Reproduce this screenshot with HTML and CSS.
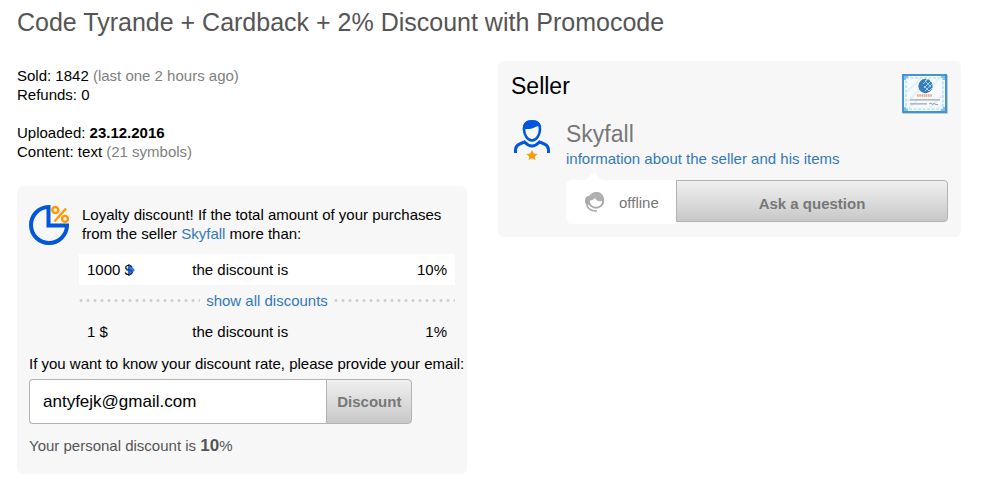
FILE: index.html
```html
<!DOCTYPE html>
<html lang="en">

<head>
    <meta charset="UTF-8">
    <meta name="viewport" content="width=device-width, initial-scale=1.0">
    <title>Code Tyrande + Cardback</title>
    <link rel="stylesheet" href="styles.css">
</head>

<body>
    <h1>Code Tyrande + Cardback + 2% Discount with Promocode</h1>
    <div class="columns">
        <div class="product">
            <p>Sold: 1842 <span class="muted">(last one 2 hours ago)</span><br>Refunds: 0</p>
            <p>Uploaded: <b>23.12.2016</b><br>Content: text <span class="muted">(21 symbols)</span></p>

            <div class="card loyalty">
                <div class="loyalty-head">
                    <svg width="40" height="40" viewBox="0 0 40 40" fill="none">
                        <path d="M19.5 2A18 18 0 1 0 38 20.5H19.5Z" stroke="#0057dc" stroke-width="4"/>
                        <g stroke="#f90" stroke-width="2.4">
                            <circle cx="26.3" cy="5" r="3"/>
                            <circle cx="36" cy="13.9" r="3"/>
                            <path d="M25.5 16.5L37 3.5"/>
                        </g>
                    </svg>
                    <div>Loyalty discount! If the total amount of your purchases from the seller <a href="#">Skyfall</a> more than:</div>
                </div>
                <table class="rates">
                    <tr class="current">
                        <td><span class="amount">1000 $<svg class="marker" width="9" height="12" viewBox="0 0 9 12"><path d="M3 0L9 6L3 12V8L0 6L3 4Z" fill="#0057dc" fill-opacity=".8"/></svg></span></td>
                        <td>the discount is</td>
                        <td class="percent">10%</td>
                    </tr>
                    <tr>
                        <td colspan="3" class="more">
                            <div class="dotted"><a href="#">show all discounts</a></div>
                        </td>
                    </tr>
                    <tr>
                        <td>1 $</td>
                        <td>the discount is</td>
                        <td class="percent">1%</td>
                    </tr>
                </table>
                <form>
                    <label for="email">If you want to know your discount rate, please provide your email:</label>
                    <div class="email-row">
                        <input type="email" id="email" name="email" value="antyfejk@gmail.com">
                        <button type="button">Discount</button>
                    </div>
                </form>
                <div class="personal">Your personal discount is <b>10</b>%</div>
            </div>
        </div>

        <div class="card seller">
            <div class="seller-head">
                <h2>Seller</h2>
                <svg width="46" height="40" viewBox="0 0 46 40" fill="none">
                    <path d="M1 1H46V40H1Z" fill="#bccbd5"/>
                    <path d="M1 1H44V38H1Z" fill="#f4fafd" stroke="#4295d2" stroke-width="2"/>
                    <path d="M5 18L18 5M5 28L28 5M6 35L16 25M30 12L37 5M28 34L41 21M36 34L41 29" stroke="#e3f1f9" stroke-width="2"/>
                    <path d="M4 4H41V35H4Z" stroke="#a9d4ee" stroke-width="1.2" stroke-dasharray="3 1.5"/>
                    <path d="M3 6V3H6M39 3H42V6M3 33V36H6M39 36H42V33" stroke="#83c0e6" stroke-width="2"/>
                    <circle cx="23.5" cy="12" r="7.2" fill="#347fb9"/>
                    <path d="M23 7l2-2M21 10l5-5M22 14l7-7M23 17l7-7M27 17l3-3M24 8l5 5M22 12l5 5" stroke="#b6d5ea" stroke-width=".9"/>
                    <path d="M15 21.5H30" stroke="#efa88b" stroke-width="2.4" stroke-dasharray="1.7 .5"/>
                    <path d="M8 25.8H38M8 29.8H25" stroke="#9ea6aa" stroke-width="1.3"/>
                    <path d="M27 30l2-1 1 1.5 2-1 2 1 2 .2" stroke="#929ca3"/>
                </svg>
            </div>
            <div class="seller-body">
                <svg width="36" height="40" viewBox="0 0 36 40" fill="none">
                    <path d="M10 9C10 14 13 20.5 18 20.5S26 14 26 9C26 4 23 1.5 18 1.5S10 4 10 9Z" stroke="#0057dc" stroke-width="2.6"/>
                    <path d="M9 11C8 3 12 0 18 0C24 0 28 3 27 10L25.5 6C21 6 20 9 15 9H11Z" fill="#0057dc"/>
                    <path d="M1.5 33V30C1.5 25.5 5 24 10.5 22Q18 30 25.5 22C31 24 34.5 25.5 34.5 30V33" stroke="#0057dc" stroke-width="3"/>
                    <path d="M18 30l1.7 3.6 3.8.5-2.8 2.6.7 3.3-3.4-1.8-3.4 1.8.7-3.3-2.8-2.6 3.8-.5Z" fill="#f90"/>
                </svg>
                <div class="seller-info">
                    <div class="seller-name">Skyfall</div>
                    <a href="#">information about the seller and his items</a>
                    <div class="contact">
                        <div class="status">
                            <svg width="20" height="20" viewBox="0 0 20 20" fill="none">
                                <circle cx="11" cy="8.5" r="7.3" fill="#fff" stroke="#aaa" stroke-width="2"/>
                                <path d="M4 8C4 2 8 0 12 0C16 0 19 3 19 9H17C13 10 11 8 10 6C8 8 6 9 4 8Z" fill="#b0b0b0"/>
                                <path d="M4 4C-1 4-1 12 2 13L5 12Z" fill="#aaa"/>
                                <path d="M2 12C2 16 5 18.5 10 19H12" stroke="#aaa" stroke-width="1.6"/>
                            </svg>
                            <span>offline</span>
                        </div>
                        <button type="button">Ask a question</button>
                    </div>
                </div>
            </div>
        </div>
    </div>
</body>

</html>
```

FILE: styles.css
```css
* {
    box-sizing: border-box;
}
body {
    margin: 0;
    padding: 7px 24px 6px 17px;
    font-family: "Liberation Sans", Arial, sans-serif;
    font-size: 15px;
    line-height: 19px;
    color: #000;
    background: #fff;
}
h1 {
    margin: 0 0 24px;
    font-size: 25px;
    line-height: 30px;
    font-weight: normal;
    color: #555;
}
h2 {
    margin: 0;
    font-size: 23px;
    line-height: 24px;
    font-weight: normal;
}
p {
    margin: 0 0 19px;
}
a {
    color: #337ab7;
    text-decoration: none;
}
svg {
    display: block;
    flex: none;
}
button {
    padding: 0 10px;
    border: 1px solid #b2b2b2;
    border-radius: 0 4px 4px 0;
    background: linear-gradient(#f0f0f0, #c8c8c8);
    font-family: inherit;
    font-size: 15px;
    font-weight: bold;
    color: #777;
    cursor: pointer;
}
.columns {
    display: grid;
    grid-template-columns: minmax(0, 450fr) minmax(0, 463fr);
    gap: 31px;
    align-items: start;
}
.product {
    padding-top: 5px;
}
.muted {
    color: #808080;
}
.card {
    background: #f7f7f7;
    border-radius: 6px;
}

/* loyalty discount */
.loyalty {
    margin-top: 25px;
    padding: 19px 12px;
}
.loyalty-head {
    display: flex;
    gap: 13px;
}
.rates {
    width: calc(100% - 50px);
    margin: 9px 0 7px 50px;
    border-collapse: collapse;
    table-layout: fixed;
}
.rates td {
    height: 31px;
    padding: 0 8px;
}
.rates .current {
    background: #fff;
}
.rates td:first-child {
    width: 28%;
}
.rates .percent {
    text-align: right;
}
.rates .more {
    padding: 0;
}
.amount {
    position: relative;
}
.marker {
    position: absolute;
    right: -2px;
    top: 3px;
}
.dotted {
    display: flex;
    align-items: center;
    gap: 6px;
}
.dotted::before,
.dotted::after {
    content: "";
    flex: 1;
    height: 3px;
    background: radial-gradient(circle at 2px center, #d0d0d0 1px, transparent 2px) 0 0 / 7px 3px;
}
.loyalty label {
    display: block;
    white-space: nowrap;
}
.email-row {
    display: flex;
    width: 90%;
    height: 45px;
    margin: 6px 0 12px;
}
.email-row input {
    flex: 1;
    min-width: 0;
    padding: 0 13px;
    border: 1px solid #b2b2b2;
    border-right: 0;
    border-radius: 4px 0 0 4px;
    background: #fff;
    font-family: inherit;
    font-size: 17px;
}
.personal {
    color: #555;
}
.personal b {
    font-size: 17px;
}

/* seller */
.seller {
    padding: 13px;
}
.seller-head {
    display: flex;
    justify-content: space-between;
}
.seller-body {
    display: flex;
    gap: 16px;
    padding: 6px 0 0 3px;
}
.seller-info {
    flex: 1;
}
.seller-name {
    font-size: 23px;
    line-height: 29px;
    color: #777;
}
.contact {
    display: flex;
    align-items: flex-start;
    margin-top: 12px;
}
.contact button {
    flex: 1;
    height: 42px;
    padding-top: 4px;
}
.status {
    position: relative;
    display: flex;
    align-items: center;
    gap: 14px;
    width: 110px;
    height: 44px;
    padding-left: 19px;
    border-radius: 6px 0 0 6px;
    background: #fff;
    color: #777;
}
/* tail of the status bubble */
.status::before {
    content: "";
    position: absolute;
    left: 20px;
    bottom: 100%;
    border: 8px solid transparent;
    border-top: 0;
    border-bottom-color: #fff;
}
```
